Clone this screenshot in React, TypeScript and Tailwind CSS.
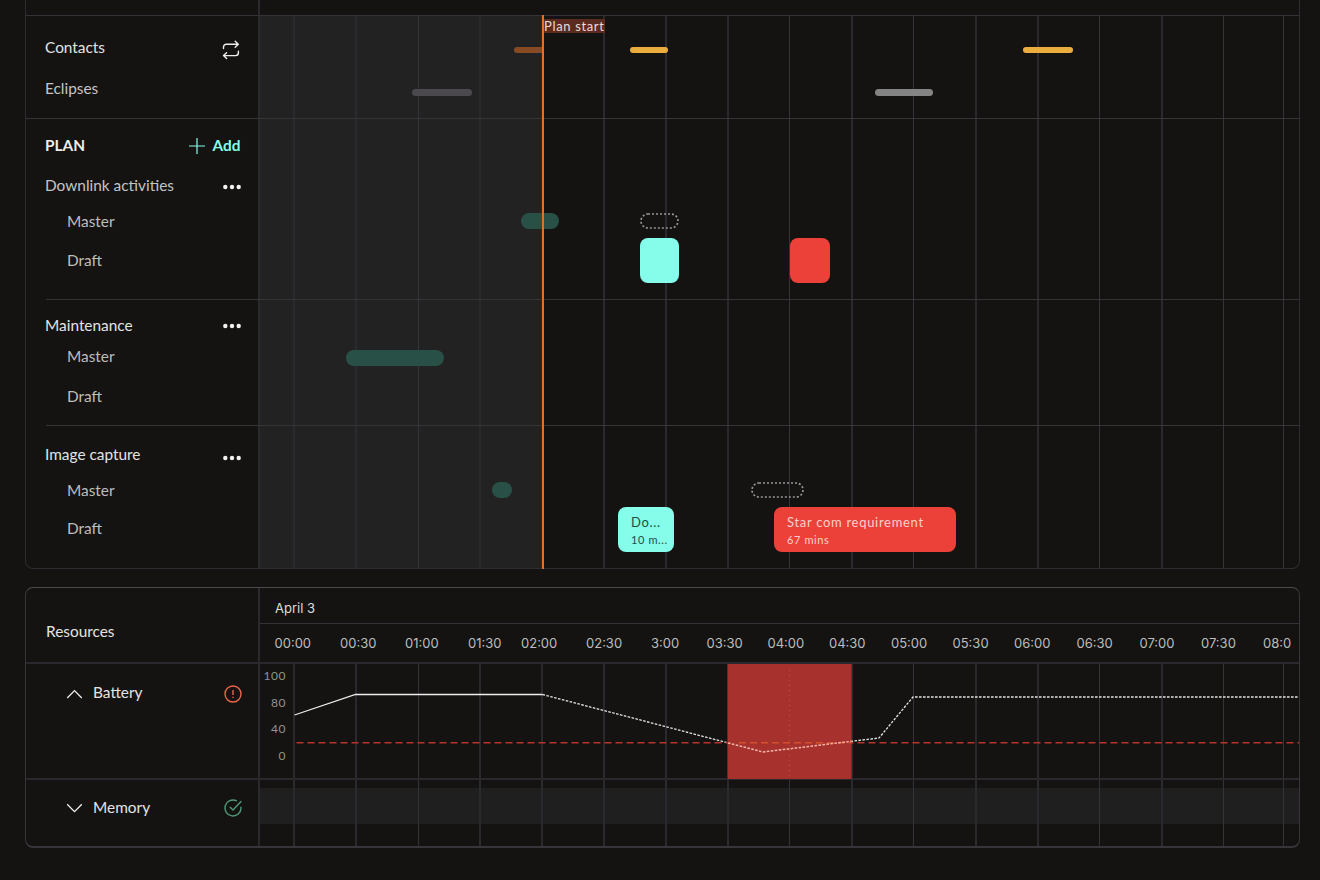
import type { ReactNode } from 'react';
import clsx from 'clsx';

type BarKind = 'pastContact' | 'contact' | 'pastEclipse' | 'eclipse' | 'done' | 'ghost' | 'ok' | 'conflict';

interface Bar {
  kind: BarKind;
  // px from the left edge of the track
  left: number;
  top: number;
  width: number;
  title?: string;
  meta?: string;
}

interface Lane {
  label: string;
  height: string;
  style: string;
  action?: ReactNode;
  bars?: Bar[];
}

const barStyles: Record<BarKind, string> = {
  pastContact: 'h-1.5 rounded-l-full bg-[#874a23]',
  contact: 'h-1.5 rounded-full bg-[#ecad3f]',
  pastEclipse: 'h-[7px] rounded-full bg-[#4b494d]',
  eclipse: 'h-[7px] rounded-full bg-[#858484]',
  done: 'h-4 rounded-full bg-[#295047]',
  ghost: 'h-4',
  ok: 'h-[44.5px] rounded-lg bg-[#85fdea] text-[#1f4f47]',
  conflict: 'h-[44.5px] rounded-lg bg-[#eb4139] text-[#fbd0cc]',
};

const columns = [
  { width: 35, thin: false },
  { width: 62, thin: false },
  { width: 62, thin: true },
  { width: 62, thin: false },
  { width: 62, thin: false },
  { width: 62, thin: false },
  { width: 62, thin: false },
  { width: 62, thin: false },
  { width: 61, thin: true },
  { width: 63, thin: false },
  { width: 61, thin: true },
  { width: 63, thin: false },
  { width: 62, thin: false },
  { width: 61, thin: true },
  { width: 63, thin: false },
  { width: 61, thin: true },
  { width: 60, thin: true },
];

const hours = [
  { label: '00:00', width: 65.5 },
  { label: '00:30', width: 65 },
  { label: '01:00', width: 63 },
  { label: '01:30', width: 53 },
  { label: '02:00', width: 65 },
  { label: '02:30', width: 65 },
  { label: '3:00', width: 55.5 },
  { label: '03:30', width: 61 },
  { label: '04:00', width: 61.5 },
  { label: '04:30', width: 62 },
  { label: '05:00', width: 61.5 },
  { label: '05:30', width: 61.5 },
  { label: '06:00', width: 62.5 },
  { label: '06:30', width: 63 },
  { label: '07:00', width: 61.5 },
  { label: '07:30', width: 62 },
  { label: '08:0', width: 36 },
];

const heading = 'pl-[19px] text-[#e3e3e3]';
const muted = 'pl-[19px] text-[#c4c4c4]';
const sub = 'pl-[41px] text-[#bdbdbd]';

function RepeatIcon() {
  return (
    <svg className="h-5 w-[18px]" viewBox="0 0 18 20" fill="none" stroke="#ededed" strokeWidth="1.4" strokeLinecap="round" strokeLinejoin="round">
      <path d="M1.5 8.6V7a2.8 2.8 0 0 1 2.8-2.8H16M13.2 1.3 16.3 4.2 13.2 7.2" />
      <path d="M16.4 11.2v1.6a2.8 2.8 0 0 1-2.8 2.8H1.8M4.6 12.7 1.5 15.6l3.1 3" />
    </svg>
  );
}

function MoreIcon() {
  return (
    <svg className="h-5 w-[18px]" viewBox="0 0 18 20" fill="#f2f2f2">
      <circle cx="2.3" cy="10" r="2.2" />
      <circle cx="9" cy="10" r="2.2" />
      <circle cx="15.7" cy="10" r="2.2" />
    </svg>
  );
}

function AddButton() {
  return (
    <button className="flex items-center gap-2 font-bold text-[#85fdea]">
      <svg className="h-4 w-4" viewBox="0 0 16 16" fill="none" stroke="currentColor" strokeWidth="1.2">
        <path d="M8 0v16M0 8h16" />
      </svg>
      <span>Add</span>
    </button>
  );
}

const sections: { id: string; className: string; inset?: boolean; lanes: Lane[] }[] = [
  {
    id: 'events',
    className: 'h-[102px] pt-[11px]',
    lanes: [
      {
        label: 'Contacts',
        height: 'h-[41px]',
        style: heading,
        action: <div className="mr-px pt-1"><RepeatIcon /></div>,
        bars: [
          { kind: 'pastContact', left: 255, top: 20, width: 28 },
          { kind: 'contact', left: 370.5, top: 20, width: 38.5 },
          { kind: 'contact', left: 763.5, top: 20, width: 50 },
        ],
      },
      {
        label: 'Eclipses',
        height: 'h-[41px]',
        style: muted,
        bars: [
          { kind: 'pastEclipse', left: 152.5, top: 21, width: 60.5 },
          { kind: 'eclipse', left: 616, top: 21, width: 58 },
        ],
      },
    ],
  },
  {
    id: 'downlink',
    className: 'h-[181px] pt-2',
    lanes: [
      { label: 'PLAN', height: 'h-10', style: 'pl-[19px] font-bold text-[#ededed]', action: <AddButton /> },
      { label: 'Downlink activities', height: 'h-10', style: muted, action: <div className="pt-0.5"><MoreIcon /></div> },
      {
        label: 'Master',
        height: 'h-8',
        style: sub,
        bars: [
          { kind: 'done', left: 261.5, top: 7.4, width: 38.5 },
          { kind: 'ghost', left: 381, top: 7.4, width: 39 },
        ],
      },
      {
        label: 'Draft',
        height: 'h-[45px]',
        style: sub,
        bars: [
          { kind: 'ok', left: 381, top: 0, width: 39 },
          { kind: 'conflict', left: 531, top: 0, width: 39.5 },
        ],
      },
    ],
  },
  {
    id: 'maintenance',
    className: 'h-[126px] pt-[11px]',
    inset: true,
    lanes: [
      { label: 'Maintenance', height: 'h-8', style: heading, action: <MoreIcon /> },
      { label: 'Master', height: 'h-[30px]', style: sub, bars: [{ kind: 'done', left: 86.5, top: 8, width: 98 }] },
      { label: 'Draft', height: 'h-[49px]', style: sub },
    ],
  },
  {
    id: 'capture',
    className: 'h-[142px] pt-[11px]',
    inset: true,
    lanes: [
      { label: 'Image capture', height: 'h-[38px]', style: heading, action: <div className="pt-1.5"><MoreIcon /></div> },
      {
        label: 'Master',
        height: 'h-[33px]',
        style: sub,
        bars: [
          { kind: 'done', left: 232.5, top: 8.4, width: 20.5 },
          { kind: 'ghost', left: 492, top: 8.4, width: 53 },
        ],
      },
      {
        label: 'Draft',
        height: 'h-[44px]',
        style: sub,
        bars: [
          { kind: 'ok', left: 359, top: 0, width: 55.5, title: 'Do...', meta: '10 m...' },
          { kind: 'conflict', left: 515, top: 0, width: 181.5, title: 'Star com requirement', meta: '67 mins' },
        ],
      },
    ],
  },
];

function GridLines() {
  return (
    <div className="flex h-full w-full">
      {columns.map((col, i) => (
        <div
          key={i}
          className={clsx('h-full shrink-0', col.thin ? 'border-r border-[#343339]' : 'border-r-2 border-[#2a292d]')}
          style={{ width: col.width }}
        />
      ))}
    </div>
  );
}

function TimelineBar({ bar }: { bar: Bar }) {
  return (
    <div
      className={clsx('absolute overflow-hidden whitespace-nowrap', barStyles[bar.kind])}
      style={{ left: bar.left, top: bar.top, width: bar.width }}
    >
      {bar.kind === 'ghost' && (
        <svg className="block h-full w-full" fill="none" stroke="#969696" strokeWidth="1.7" strokeDasharray="2 2">
          <rect x="1" y="1" width={bar.width - 2} height="14" rx="7" />
        </svg>
      )}
      {bar.title && (
        <div className="pl-[13px] pt-[7px]">
          <div className="text-[13px] leading-[17px] tracking-[0.7px]">{bar.title}</div>
          <div className="text-[11px] leading-[17px] tracking-[0.6px]">{bar.meta}</div>
        </div>
      )}
    </div>
  );
}

function PlanPanel() {
  return (
    <section className="relative h-[569px] rounded-b-lg border border-t-0 border-[#2e2d31]">
      <div className="flex h-4 border-b border-[#343338]">
        <div className="w-[234px] border-r-2 border-[#2a292d]" />
      </div>
      <div className="absolute bottom-0 left-[232px] right-0 top-4 flex overflow-hidden border-l-2 border-[#2a292d]">
        <div className="absolute inset-y-0 left-0 w-[283px] bg-[#222222]" />
        <div className="relative h-full w-full">
          <GridLines />
        </div>
      </div>
      {sections.map((section) => (
        <div key={section.id} className={clsx('relative', section.className)}>
          {section.id !== 'events' && (
            <div className={clsx('absolute right-0 top-0 h-px bg-[#353439]', section.inset ? 'left-5' : 'left-0')} />
          )}
          {section.lanes.map((lane) => (
            <div key={lane.label} className={clsx('flex', lane.height)}>
              <div className={clsx('flex w-[233px] items-center justify-between pr-[18.5px] text-[15.4px]', lane.style)}>
                <span>{lane.label}</span>
                {lane.action}
              </div>
              <div className="relative flex-1">
                {lane.bars?.map((bar) => <TimelineBar key={bar.left} bar={bar} />)}
              </div>
            </div>
          ))}
        </div>
      ))}
      <div className="absolute -bottom-px left-[516px] top-[15px] w-0.5 bg-[#e0702d]" />
      <div className="absolute left-[518px] top-[19px] h-3.5 whitespace-nowrap bg-[#5b2b20] text-[13px] leading-[14px] tracking-[0.65px] text-[#e8dcd9]">
        Plan start
      </div>
    </section>
  );
}

function BatteryChart() {
  return (
    <svg className="block h-[115px] w-full" fill="none">
      <path d="M34.5 51 95.5 30.5H282.5" stroke="#ededed" strokeWidth="1.3" />
      <path d="M282.5 30.5 503 88 619 74 653 33H1039" stroke="#e4e4e4" strokeWidth="1.3" strokeDasharray="2.6 1.4" />
      <path d="M36.5 78.7H1039" stroke="#b8352b" strokeWidth="1.5" strokeDasharray="7 4" />
      <rect x="467.6" y="0" width="124" height="115" fill="#a7312c" />
      <path d="M529.5 6V115" stroke="#c4523f" strokeWidth="1" strokeDasharray="1 4" />
      <path d="M479 78.7H591.5" stroke="#d4502f" strokeWidth="1.6" strokeDasharray="7 4" />
      <path d="M468 78.9 503 88 591.5 77.3" stroke="#f8b5aa" strokeWidth="1.5" strokeDasharray="2.6 1.4" />
    </svg>
  );
}

function ResourcesPanel() {
  return (
    <section className="relative flex h-[261px] overflow-hidden rounded-lg border border-b-2 border-[#36353a] border-t-[#4b4a4e]">
      <div className="absolute bottom-0 left-[234px] right-0 top-[76px]">
        <div className="absolute inset-x-0 top-[124px] h-9 bg-[#1f1f1f]" />
        <div className="relative h-full">
          <GridLines />
        </div>
      </div>
      <div className="relative flex w-[234px] shrink-0 flex-col border-r-2 border-[#2a292d] text-[15.4px] text-[#e3e3e3]">
        <div className="h-[76px] border-b-2 border-[#2a292d] pl-5 pt-[31px] leading-6">Resources</div>
        <div className="h-[116px] border-b-2 border-[#2a292d]">
          <div className="flex h-[58px] items-center pl-10 pr-4">
            <svg className="mr-2.5 mt-0.5 h-4 w-[17px]" viewBox="0 0 17 16" fill="none" stroke="#ededed" strokeWidth="1.3">
              <path d="M1.2 12 8.5 4.6 15.8 12" />
            </svg>
            <span className="flex-1">Battery</span>
            <svg className="mt-0.5 h-[18px] w-[18px]" viewBox="0 0 18 18" fill="none" stroke="#ec6547" strokeWidth="1.4">
              <circle cx="9" cy="9" r="8" />
              <path d="M9 5v5M9 11.8v1.3" />
            </svg>
          </div>
        </div>
        <div className="flex h-14 items-center pl-10 pr-4">
          <svg className="mr-2.5 h-4 w-[17px]" viewBox="0 0 17 16" fill="none" stroke="#ededed" strokeWidth="1.3">
            <path d="M1.2 4.2 8.5 11.6 15.8 4.2" />
          </svg>
          <span className="flex-1">Memory</span>
          <svg className="h-[18px] w-[18px]" viewBox="0 0 18 18" fill="none" stroke="#4f9b78" strokeWidth="1.4" strokeLinecap="round" strokeLinejoin="round">
            <path d="M12.3 1.7A8 8 0 1 0 17 9V8.2" />
            <path d="M6.2 8.3 9 11 17 2.6" />
          </svg>
        </div>
      </div>
      <div className="relative flex-1 overflow-hidden">
        <div className="flex h-9 items-center border-b border-[#343338] pl-[15px] pt-1.5 font-[Inter] text-[13px] text-[#dedede]">April 3</div>
        <div className="flex h-10 items-center border-b-2 border-[#2a292d] pl-[14.5px] pt-px font-[Inter] text-[13px] text-[#bdbdbd]">
          {hours.map((hour) => (
            <div key={hour.label} className="shrink-0" style={{ width: hour.width }}>{hour.label}</div>
          ))}
        </div>
        <div className="relative h-[116px] border-b-2 border-[#2a292d]">
          <BatteryChart />
          <div className="absolute -top-px left-0 w-[26px] text-right text-xs leading-[26.6px] tracking-[0.5px] text-[#929292]">
            <div>100</div>
            <div>80</div>
            <div>40</div>
            <div>0</div>
          </div>
        </div>
      </div>
    </section>
  );
}

export default function App() {
  return (
    <main className="flex h-[880px] w-[1320px] flex-col gap-[18px] overflow-hidden bg-[#141311] pl-[25px] pr-5 font-[Lato,Carlito,sans-serif]">
      <PlanPanel />
      <ResourcesPanel />
    </main>
  );
}
